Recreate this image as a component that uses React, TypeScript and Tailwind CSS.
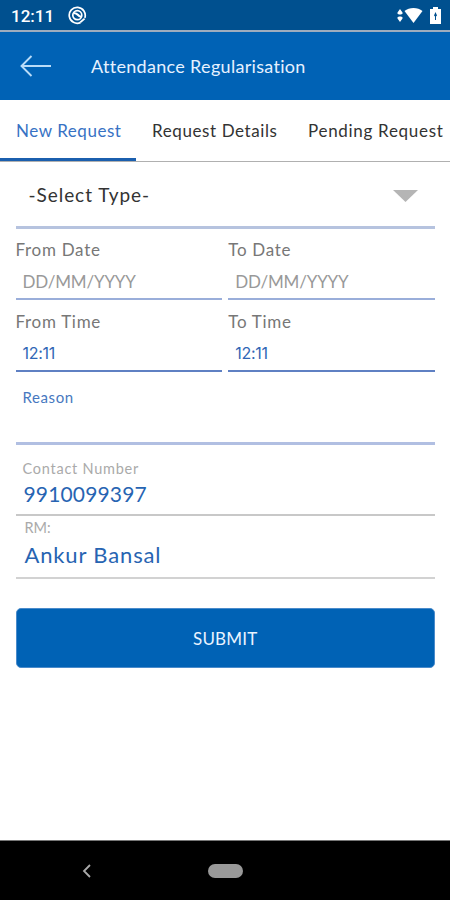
import clsx from 'clsx';

const tabs = [
  { label: 'New Request', className: 'w-[136px] pl-4 tracking-[0.55px]' },
  { label: 'Request Details', className: 'w-[156px] pl-4 tracking-[0.6px]' },
  { label: 'Pending Request', className: 'w-[158px] pl-4 tracking-[0.7px]' },
];

function StatusBar() {
  return (
    <div className="flex h-[30px] shrink-0 items-center bg-[#00508f] pr-[9px] pl-[11px] text-white">
      <span className="w-[44px] pt-0.5 font-[Roboto,sans-serif] text-[17px] leading-5 font-medium">12:11</span>
      <svg className="ml-[13px] mt-px" width="19" height="19" viewBox="0 0 19 19" fill="none" stroke="currentColor">
        <path d="M12.500 16.600A8 8 0 1 1 16.800 11.900" strokeWidth="1.700" />
        <path d="M12.200 16.400l4.400-3.800" strokeWidth="1.900" />
        <circle cx="9.300" cy="9.200" r="4.500" strokeWidth="1.700" />
        <path d="M5.800 7c2 .2 3 .6 4 1.800s2 1.800 3.600 2.200" strokeWidth="2.200" />
      </svg>
      <div className="ml-auto flex items-center">
        <svg width="6" height="13" viewBox="0 0 6 13" fill="currentColor">
          <path d="M3 0l2.500 3.500v1.200l-1.500.8H2L.5 4.700V3.500zM3 13L.5 9.500V8.300L2 7.500h2l1.500.8v1.200z" />
        </svg>
        <svg className="ml-px" width="19" height="17" viewBox="0 0 20 17" fill="currentColor">
          <path d="M0.500 3.800C5.500-0.300 14.500-0.300 19.500 3.800L10 16.500z" />
        </svg>
        <svg className="ml-[7px]" width="11" height="17" viewBox="0 0 11 17" fill="currentColor">
          <path fillRule="evenodd" d="M3 0h5v2h3v15H0V2h3zM5.500 5L4 8.500l1 1v3.500h1V9.500l1-1z" />
        </svg>
      </div>
    </div>
  );
}

function Header() {
  return (
    <header className="flex h-[70px] shrink-0 items-center border-t-2 border-[#9eacbe] bg-[#0062b5] pl-5 text-white">
      <svg width="31" height="22" viewBox="0 0 31 22" fill="none" stroke="#b9dcf8" strokeWidth="1.900">
        <path d="M31 11H1.500M11.500 1L1.500 11l10 10" />
      </svg>
      <h1 className="ml-10 text-[18px] tracking-[0.31px] text-[#e6f1ff]">Attendance Regularisation</h1>
    </header>
  );
}

interface FieldProps {
  label: string;
  value: string;
  placeholder?: boolean;
}

function Field({ label, value, placeholder }: FieldProps) {
  return (
    <div
      className={clsx(
        'flex h-[72px] flex-1 flex-col border-b-2',
        placeholder ? 'border-[#9aaeda]' : 'border-[#5f80c3]'
      )}
    >
      <span className="mt-[10px] h-6 text-[17px] leading-6 tracking-[0.7px] text-[#777]">{label}</span>
      <span
        className={clsx(
          'leading-6',
          placeholder
            ? 'mt-2 pl-[7px] text-[17px] tracking-[-0.2px] text-[#999]'
            : 'mt-[7px] pl-[7px] font-[Inter,sans-serif] text-[16px] tracking-[-0.3px] text-[#3066b5]'
        )}
      >
        {value}
      </span>
    </div>
  );
}

export default function App() {
  return (
    <div className="flex h-[900px] w-[450px] flex-col overflow-hidden bg-white font-[Lato,sans-serif] whitespace-nowrap">
      <StatusBar />
      <Header />

      <nav className="flex h-[62px] shrink-0 border-b border-[#b0b0b0]">
        {tabs.map((tab, i) => (
          <button
            key={tab.label}
            className={clsx(
              'flex h-[61px] shrink-0 items-center border-b-3 pt-[3px] text-left text-[17px]',
              tab.className,
              i === 0 ? 'border-[#1b5fae] text-[#3772c4]' : 'border-transparent text-[#333]'
            )}
          >
            {tab.label}
          </button>
        ))}
      </nav>

      <main className="flex flex-1 flex-col pr-[15px] pl-[15.500px]">
        <div className="flex h-[67px] items-center justify-between border-b-3 border-[#b6c3df] pr-[17px] pl-[13px]">
          <span className="pt-[3px] text-[19px] tracking-[0.95px] text-[#333]">-Select Type-</span>
          <svg className="mt-[3px]" width="25" height="12" viewBox="0 0 25 12" fill="#b5b5b5">
            <path d="M0 0h25L12.500 12z" />
          </svg>
        </div>

        <div className="-mt-px flex gap-[6px]">
          <Field label="From Date" value="DD/MM/YYYY" placeholder />
          <Field label="To Date" value="DD/MM/YYYY" placeholder />
        </div>
        <div className="flex gap-[6px]">
          <Field label="From Time" value="12:11" />
          <Field label="To Time" value="12:11" />
        </div>

        <div className="h-[73px] border-b-3 border-[#b1bfe2] pt-[15px] pl-[7px] text-[15px] leading-5 tracking-[0.6px] text-[#4778c0]">
          Reason
        </div>

        <div className="flex h-[71px] flex-col border-b-2 border-[#c8c8c8] pl-[7px]">
          <span className="mt-[14px] text-[14.500px] leading-5 tracking-[0.75px] text-[#aaa]">Contact Number</span>
          <span className="mt-[3px] pl-px text-[21px] leading-6 tracking-[0.15px] text-[#2764b2]">9910099397</span>
        </div>
        <div className="flex h-[63px] flex-col border-b-2 border-[#d2d2d2] pl-[9px]">
          <span className="mt-[2px] text-[14.500px] leading-5 text-[#aaa]">RM:</span>
          <span className="mt-[3px] text-[22px] leading-7 tracking-[0.85px] text-[#2764b2]">Ankur Bansal</span>
        </div>

        <button className="mt-[29px] h-[60px] rounded-[5px] border border-[#4a8bcb] bg-[#0062b5] pt-px text-[17px] tracking-[0.2px] text-[#e9f3ff]">
          SUBMIT
        </button>
      </main>

      <footer className="flex h-[60px] shrink-0 items-center border-t border-[#777] bg-black pl-[82px]">
        <svg width="9" height="14" viewBox="0 0 9 14" fill="none" stroke="#aaa" strokeWidth="1.800">
          <path d="M8 1L2 7l6 6" />
        </svg>
        <div className="ml-[117px] h-[14px] w-[35px] rounded-full bg-[#999]" />
      </footer>
    </div>
  );
}
